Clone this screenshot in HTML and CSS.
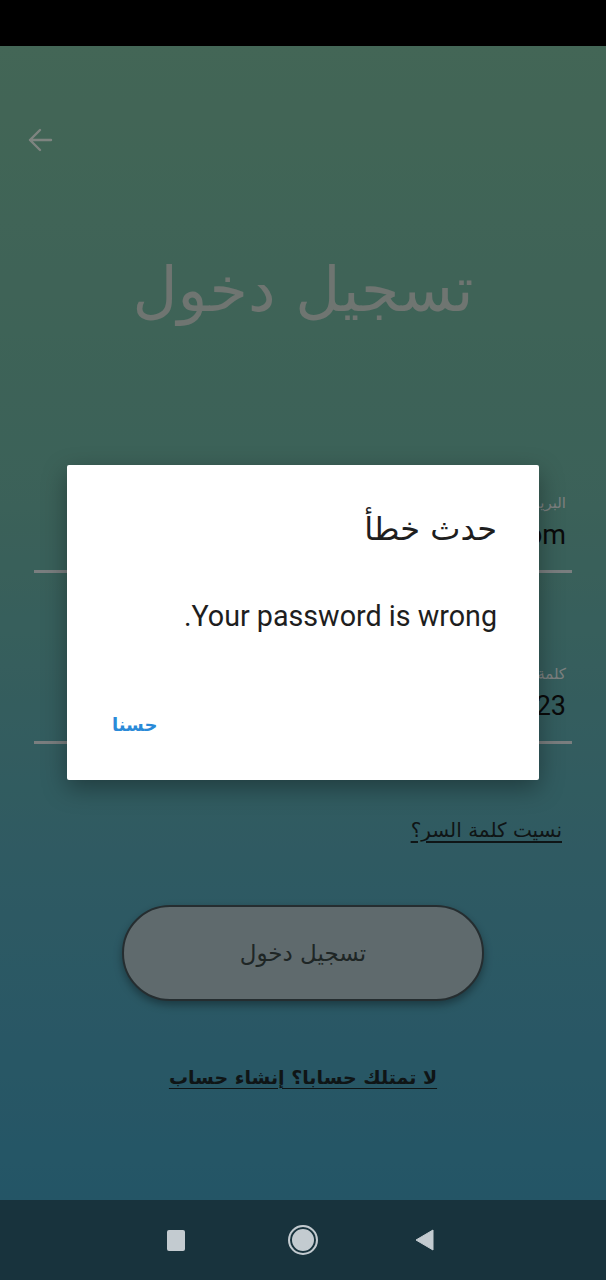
FILE: index.html
```html
<!DOCTYPE html>
<html lang="ar" dir="rtl">
<head>
<meta charset="utf-8">
<link rel="stylesheet" href="styles.css">
</head>
<body>
<div class="screen">
  <div class="status"></div>
  <main class="app">
    <div class="topbar">
      <svg class="back" viewBox="0 0 28 28" width="28" height="28"><path d="M25 14H4M14 4L4 14l10 10" fill="none" stroke="currentColor" stroke-width="2.4" stroke-linecap="round" stroke-linejoin="round"/></svg>
    </div>
    <h1 class="title">تسجيل دخول</h1>
    <div class="field field-email">
      <label class="label">البريد الإلكتروني</label>
      <div class="value" dir="ltr">test@gmail.com</div>
      <div class="line"></div>
    </div>
    <div class="field field-pass">
      <label class="label">كلمة السر</label>
      <div class="value" dir="ltr">123123</div>
      <div class="line"></div>
    </div>
    <a class="forgot">نسيت كلمة السر؟</a>
    <div class="btn-row"><button class="login">تسجيل دخول</button></div>
    <a class="signup">لا تمتلك حسابا؟ إنشاء حساب</a>

    <div class="scrim"></div>
    <div class="dialog">
      <h2 class="d-title">حدث خطأ</h2>
      <p class="d-msg">Your password is wrong.</p>
      <div class="d-actions"><span class="d-ok">حسنا</span></div>
    </div>
  </main>
  <nav class="nav">
    <span class="nav-square"></span>
    <span class="nav-home"></span>
    <svg class="nav-back" viewBox="0 0 20 22" width="20" height="22"><path d="M19 1v20L2 11z" fill="#c3cbd0" stroke="#c3cbd0" stroke-width="1" stroke-linejoin="round"/></svg>
  </nav>
</div>
</body>
</html>
```

FILE: styles.css
```css
* { box-sizing: border-box; }
html, body { margin: 0; padding: 0; }
body {
  width: 606px;
  height: 1280px;
  overflow: hidden;
  font-family: "DejaVu Sans", "Noto Sans", sans-serif;
}
.screen {
  display: flex;
  flex-direction: column;
  height: 1280px;
}
.status {
  height: 46px;
  background: #000;
  flex: none;
}
.app {
  position: relative;
  flex: 1;
  display: flex;
  flex-direction: column;
  background: linear-gradient(180deg, #70aa8f 0%, #63a294 40%, #4c95a6 75%, #3c8eab 100%);
  overflow: hidden;
}
.topbar {
  direction: ltr;
  display: flex;
  padding: 80px 0 0 26px;
  height: 108px;
}
.back { color: #d2ddd6; }
.title {
  margin: 94px 0 0;
  text-align: center;
  font-size: 62px;
  line-height: 84px;
  font-weight: normal;
  color: #b9c3bc;
  font-family: "DejaVu Sans", sans-serif;
}
.field {
  display: flex;
  flex-direction: column;
  padding: 0 34px;
}
.field-email { margin-top: 161px; }
.field-pass { margin-top: 91px; }
.label {
  font-size: 15px;
  line-height: 20px;
  color: #cfd6d6;
  padding-right: 6px;
}
.value {
  text-align: right;
  font-family: Roboto, "Liberation Sans", sans-serif;
  font-size: 27px;
  line-height: 36px;
  margin-top: 4px;
  color: #111;
  padding-right: 6px;
}
.line {
  margin-top: 17px;
  height: 3px;
  background: #cbd3d4;
}
.forgot {
  align-self: flex-start;
  margin: 72px 44px 0 0;
  font-size: 20px;
  line-height: 28px;
  color: #1a2426;
  text-decoration: underline;
  text-underline-offset: 4px;
}
.btn-row {
  display: flex;
  justify-content: center;
  margin-top: 61px;
}
.login {
  width: 362px;
  height: 96px;
  border-radius: 48px;
  background: #9eb1b6;
  border: 2px solid #3e4c50;
  box-shadow: 0 4px 8px rgba(0,0,0,0.35);
  font-family: "DejaVu Sans", sans-serif;
  font-size: 23px;
  color: #34403f;
}
.signup {
  align-self: center;
  margin-top: 62px;
  font-size: 19px;
  line-height: 28px;
  font-weight: bold;
  color: #1a2426;
  text-decoration: underline;
  text-underline-offset: 4px;
}
.scrim {
  position: absolute;
  inset: 0;
  background: rgba(0,0,0,0.4);
}
.dialog {
  position: absolute;
  top: 419px;
  left: 67px;
  width: 472px;
  height: 315px;
  background: #fff;
  border-radius: 2px;
  box-shadow: 0 8px 24px rgba(0,0,0,0.35);
  display: flex;
  flex-direction: column;
  padding: 44px 42px 0 42px;
}
.d-title {
  margin: 0;
  font-size: 32px;
  line-height: 40px;
  font-weight: normal;
  color: #1e1e1e;
}
.d-msg {
  margin: 49px 0 0;
  font-family: Roboto, "Liberation Sans", sans-serif;
  font-size: 28.7px;
  line-height: 36px;
  color: #1e1e1e;
}
.d-actions {
  margin-top: auto;
  margin-bottom: 40px;
  display: flex;
  justify-content: flex-end;
  padding-left: 3px;
}
.d-ok {
  font-size: 18px;
  font-weight: bold;
  color: #2a8ad8;
  line-height: 30px;
}
.nav {
  height: 80px;
  flex: none;
  background: #18333d;
  direction: ltr;
  display: flex;
  align-items: center;
  justify-content: center;
  padding-right: 5px;
}
.nav-square {
  width: 18px;
  height: 21px;
  background: #c3cbd0;
  border-radius: 2px;
  margin-right: 103px;
}
.nav-home {
  width: 30px;
  height: 30px;
  border-radius: 50%;
  border: 2.5px solid #c3cbd0;
  box-shadow: inset 0 0 0 2px #18333d, inset 0 0 0 20px #c3cbd0;
  margin-right: 96px;
}
.nav-back { display: block; }
```
